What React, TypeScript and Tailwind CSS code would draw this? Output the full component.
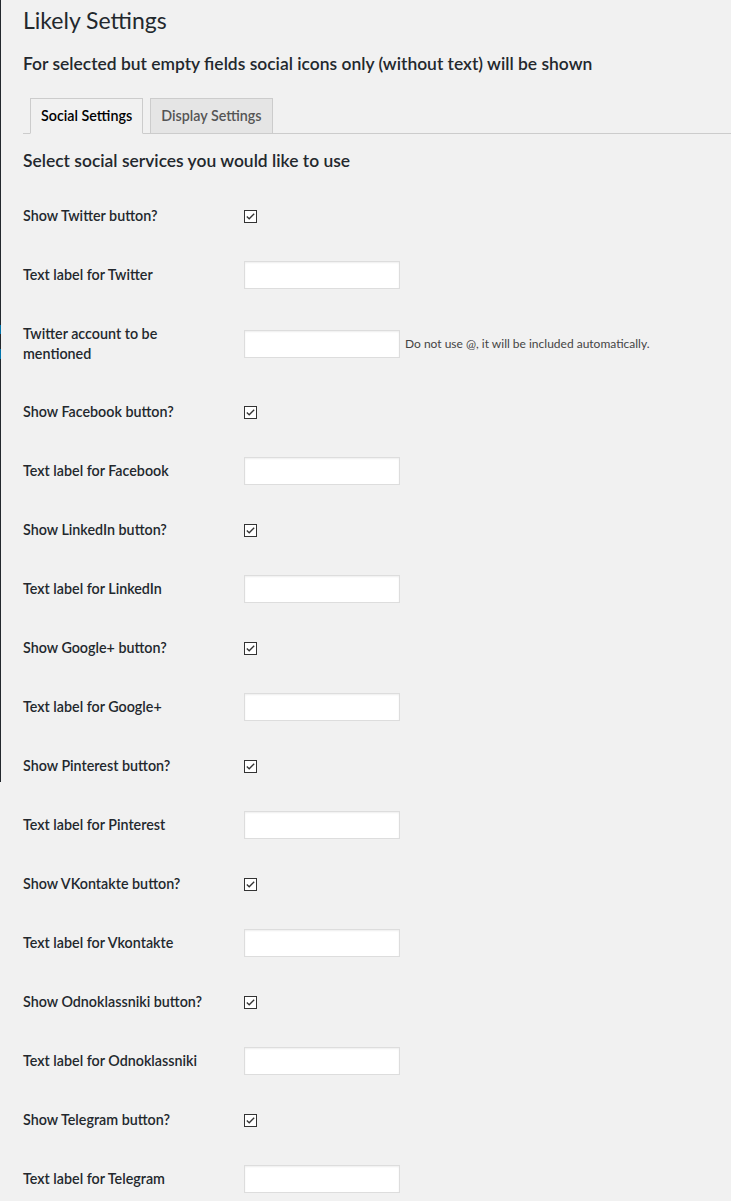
import React from 'react';

type Row =
  | { kind: 'check'; label: string }
  | { kind: 'text'; label: React.ReactNode; note?: string; tall?: boolean };

const rows: Row[] = [
  { kind: 'check', label: 'Show Twitter button?' },
  { kind: 'text', label: 'Text label for Twitter' },
  {
    kind: 'text',
    label: (
      <>
        Twitter account to be
        <br />
        mentioned
      </>
    ),
    note: 'Do not use @, it will be included automatically.',
    tall: true,
  },
  { kind: 'check', label: 'Show Facebook button?' },
  { kind: 'text', label: 'Text label for Facebook' },
  { kind: 'check', label: 'Show LinkedIn button?' },
  { kind: 'text', label: 'Text label for LinkedIn' },
  { kind: 'check', label: 'Show Google+ button?' },
  { kind: 'text', label: 'Text label for Google+' },
  { kind: 'check', label: 'Show Pinterest button?' },
  { kind: 'text', label: 'Text label for Pinterest' },
  { kind: 'check', label: 'Show VKontakte button?' },
  { kind: 'text', label: 'Text label for Vkontakte' },
  { kind: 'check', label: 'Show Odnoklassniki button?' },
  { kind: 'text', label: 'Text label for Odnoklassniki' },
  { kind: 'check', label: 'Show Telegram button?' },
  { kind: 'text', label: 'Text label for Telegram' },
];

function CheckBox() {
  return (
    <span className="flex h-[13px] w-[13px] items-center justify-center border border-[#333] bg-white">
      <svg width="9" height="7" viewBox="0 0 9 7" fill="none">
        <path d="M0.8 3.6 L3.2 5.8 L8.2 0.8" stroke="#333" strokeWidth="1.3" />
      </svg>
    </span>
  );
}

function SettingRow({ row }: { row: Row }) {
  if (row.kind === 'check') {
    return (
      <div className="flex">
        <div className="w-[221px] shrink-0 py-[20px] pr-[10px] text-[14.3px] font-semibold leading-[18px]">
          {row.label}
        </div>
        <div className="flex items-center">
          <CheckBox />
        </div>
      </div>
    );
  }
  return (
    <div className="flex">
      <div
        className={`w-[221px] shrink-0 pr-[10px] text-[14.3px] font-semibold ${
          row.tall ? 'py-[19px] leading-[20px]' : 'py-[20px] leading-[20px]'
        }`}
      >
        {row.label}
      </div>
      <div className="flex items-center gap-[5px]">
        <input
          type="text"
          className="h-[28px] w-[156px] border border-[#ddd] bg-white shadow-[inset_0_1px_2px_rgba(0,0,0,0.07)] outline-none"
        />
        {row.note && <span className="text-[12px] text-[#444]">{row.note}</span>}
      </div>
    </div>
  );
}

export default function App() {
  return (
    <div
      className="flex min-h-[1201px] bg-[#f1f1f1] text-[#23282d]"
      style={{ fontFamily: 'Lato, "Open Sans", sans-serif' }}
    >
      <div className="flex h-[782px] w-px shrink-0 flex-col bg-[#23282d]">
        <div className="h-[325px]" />
        <div className="h-[9px] bg-[#0073aa]" />
        <div className="h-[15px]" />
        <div className="h-[10px] bg-[#0073aa]" />
      </div>
      <div className="flex-1 pl-[22px]">
        <h1 className="pt-[5px] text-[23px] font-normal leading-[30px]">Likely Settings</h1>
        <h2 className="mt-[18px] text-[17.45px] font-semibold leading-[22px]">
          For selected but empty fields social icons only (without text) will be shown
        </h2>
        <div className="mt-[23px] flex border-b border-[#ccc] pl-[7px]">
          <div className="-mb-px border border-b-[#f1f1f1] border-[#ccc] bg-[#f1f1f1] px-[10px] py-[5px] text-[14.3px] font-semibold leading-[24px] text-black">
            Social Settings
          </div>
          <div className="ml-[7px] border border-b-0 border-[#ccc] bg-[#e5e5e5] px-[10px] py-[5px] text-[14.3px] font-semibold leading-[24px] text-[#555]">
            Display Settings
          </div>
        </div>
        <h3 className="mt-[16px] text-[17.45px] font-semibold leading-[22px]">
          Select social services you would like to use
        </h3>
        <div className="mt-[15px]">
          {rows.map((row, i) => (
            <SettingRow key={i} row={row} />
          ))}
        </div>
      </div>
    </div>
  );
}
